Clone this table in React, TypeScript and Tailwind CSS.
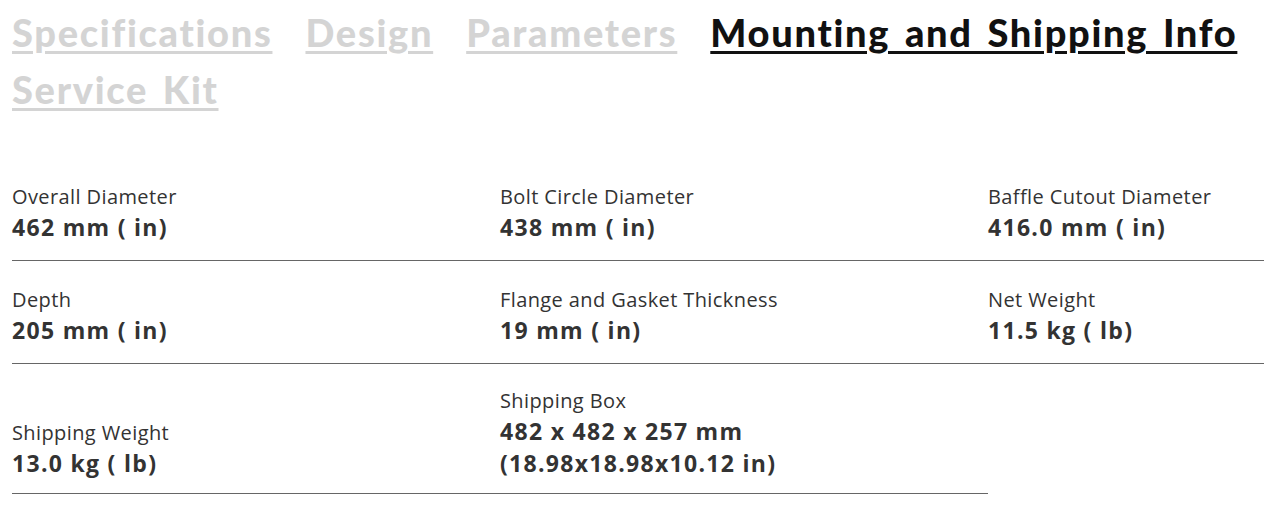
import React from 'react'

type Spec = { label: string; value: string[] }

const tabs = ['Specifications', 'Design', 'Parameters', 'Mounting and Shipping Info', 'Service Kit']
const active = 'Mounting and Shipping Info'

const specs: Spec[] = [
  { label: 'Overall Diameter', value: ['462 mm ( in)'] },
  { label: 'Bolt Circle Diameter', value: ['438 mm ( in)'] },
  { label: 'Baffle Cutout Diameter', value: ['416.0 mm ( in)'] },
  { label: 'Depth', value: ['205 mm ( in)'] },
  { label: 'Flange and Gasket Thickness', value: ['19 mm ( in)'] },
  { label: 'Net Weight', value: ['11.5 kg ( lb)'] },
  { label: 'Shipping Weight', value: ['13.0 kg ( lb)'] },
  { label: 'Shipping Box', value: ['482 x 482 x 257 mm', '(18.98x18.98x10.12 in)'] },
]

function SpecCell({ spec, last }: { spec: Spec; last: boolean }) {
  return (
    <div
      className={
        last
          ? 'flex flex-col justify-end border-b border-[#666] pt-[23px] pb-[14px]'
          : 'flex flex-col justify-end border-b border-[#666] pt-[25px] pb-[17px]'
      }
    >
      <span className="text-[20px] leading-[28px] tracking-[0.4px] text-[#333]">{spec.label}</span>
      <span className="text-[23px] leading-[32px] tracking-[1.3px] font-bold text-[#333]">
        {spec.value.map((v, i) => (
          <React.Fragment key={v}>
            {i > 0 && <br />}
            {v}
          </React.Fragment>
        ))}
      </span>
    </div>
  )
}

export default function App() {
  return (
    <div className="w-[1264px] h-[514px] overflow-hidden bg-white px-3 pt-[4px] font-['Open_Sans',sans-serif]">
      {/* Tabs */}
      <nav className="flex flex-wrap gap-x-[33px] font-['Lato',sans-serif] text-[38px] leading-[57px] font-black tracking-[1.7px] [word-spacing:4px]">
        {tabs.map((t) => (
          <a
            key={t}
            href="#"
            className={
              t === active
                ? 'text-[#111] underline decoration-[3px] underline-offset-[4px]'
                : 'text-[#d4d4d4] underline decoration-[3px] underline-offset-[4px]'
            }
          >
            {t}
          </a>
        ))}
      </nav>

      {/* Spec grid */}
      <div className="mt-[40px] grid grid-cols-[488px_488px_488px]">
        {specs.map((s, i) => (
          <SpecCell key={s.label} spec={s} last={i >= 6} />
        ))}
      </div>
    </div>
  )
}
